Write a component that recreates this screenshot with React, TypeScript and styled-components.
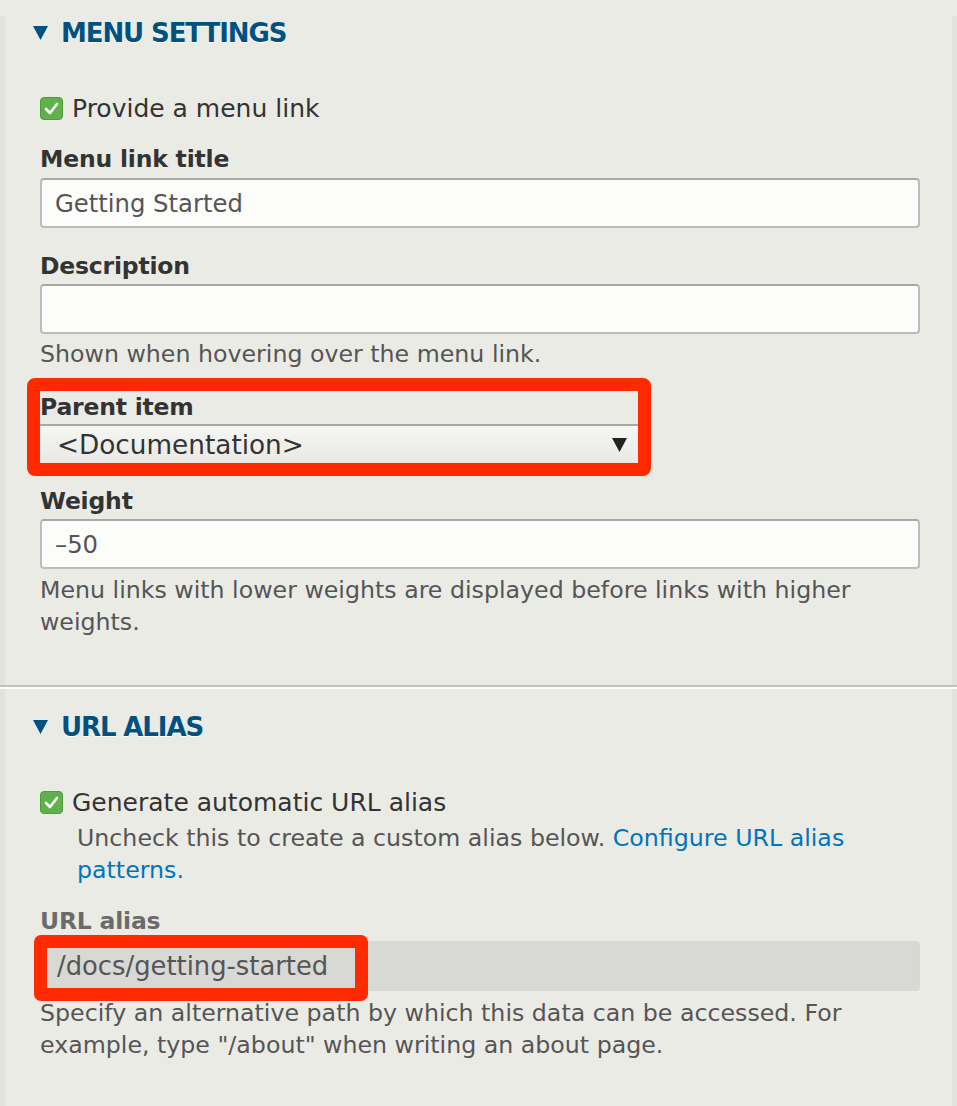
import React from 'react';
import styled, {createGlobalStyle} from 'styled-components';

const GlobalStyle = createGlobalStyle`
  body {
    margin: 0;
    background: #ebebe6;
    font-family: "DejaVu Sans", "Liberation Sans", sans-serif;
    color: #333;
  }
`

const Page = styled.div`
  width: 957px;
  min-height: 1106px;
  box-sizing: border-box;
  background: #ebebe6;
  border-left: 5px solid #e3e3de;
  border-right: 5px solid #e3e3de;
`

const Section = styled.section<{ $bottom: number }>`
  padding: 0 32px ${p => p.$bottom}px 35px;
`

const Divider = styled.div`
  height: 2px;
  background: #c2c2be;
  border-bottom: 2px solid #fbfbf9;
  margin: 0 -5px;
`

const Legend = styled.div<{ $top: number }>`
  display: flex;
  align-items: center;
  gap: 13px;
  height: 34px;
  margin-top: ${p => p.$top}px;
  margin-left: -7px;
  color: #00517f;
  font-weight: bold;
  font-size: 26px;
  letter-spacing: -1.1px;
  text-shadow: 0 1px 0 #fff;
`

const CheckRow = styled.label`
  display: flex;
  align-items: center;
  gap: 9px;
  height: 30px;
  margin-top: 43px;
  font-size: 25px;
  color: #333;
`

const Box = styled.span`
  width: 23px;
  height: 23px;
  border-radius: 4px;
  background: #5fb14b;
  border: 1px solid #4f9a3d;
  box-sizing: border-box;
  display: flex;
  align-items: center;
  justify-content: center;
`

const Label = styled.div<{ $top: number; $muted?: boolean }>`
  margin-top: ${p => p.$top}px;
  height: 30px;
  line-height: 30px;
  font-weight: bold;
  font-size: 23.5px;
  letter-spacing: -0.2px;
  color: ${p => p.$muted ? '#6b6b6b' : '#333'};
`

const Input = styled.div<{ $top: number; $disabled?: boolean }>`
  position: relative;
  margin-top: ${p => p.$top}px;
  height: 50px;
  box-sizing: border-box;
  border: ${p => p.$disabled ? '1px solid #d6d6d2' : '2px solid #bcbcbc'};
  border-top-color: ${p => p.$disabled ? '#d6d6d2' : '#a8a8a8'};
  border-radius: 4px;
  background: ${p => p.$disabled ? '#d8d8d4' : '#fcfcfa'};
  padding: 0 13px;
  display: flex;
  align-items: center;
  font-size: 24.3px;
  color: #555;
`

const Help = styled.div<{ $top: number; $indent?: number }>`
  margin-top: ${p => p.$top}px;
  padding-left: ${p => p.$indent || 0}px;
  font-size: 23.7px;
  line-height: 32px;
  color: #555;
`

const Link = styled.a`
  color: #0074bd;
  text-decoration: none;
`

const Frame = styled.div`
  position: relative;
  width: fit-content;
  margin-top: 8px;
  border: 13px solid #ff2a00;
  border-radius: 8px;
  margin-left: -13px;
`

const FrameLabel = styled.div`
  width: 598px;
  height: 33px;
  line-height: 33px;
  font-weight: bold;
  font-size: 23.5px;
  letter-spacing: -0.2px;
  background: #ebebe6;
  color: #333;
`

const Select = styled.div`
  width: 598px;
  height: 39px;
  box-sizing: border-box;
  border-top: 2px solid #a8a8a8;
  background: linear-gradient(#f6f6f3, #e8e8e4);
  display: flex;
  align-items: center;
  justify-content: space-between;
  padding: 0 11px 0 17px;
  font-size: 26.3px;
  color: #333;
`

const Mark = styled.div`
  position: absolute;
  left: -7px;
  top: -7px;
  width: 334px;
  height: 66px;
  box-sizing: border-box;
  border: 13px solid #ff2a00;
  border-radius: 7px;
  background: transparent;
`

const AliasText = styled.span`
  position: relative;
  z-index: 1;
  padding-left: 3px;
  font-size: 25.8px;
`

const Triangle = ({color}: { color: string }) => (
    <svg width="15" height="14" viewBox="0 0 15 14">
        <polygon points="0,0 15,0 7.5,14" fill={color}/>
    </svg>
)

const Check = () => (
    <svg width="15" height="13" viewBox="0 0 15 13">
        <polyline points="2,7 6,11 13,2" fill="none" stroke="#fff" strokeWidth="2.6"
                  strokeLinecap="round" strokeLinejoin="round"/>
    </svg>
)

function App() {
    return (
        <>
            <GlobalStyle/>
            <Page>
                <Section $bottom={47}>
                    <Legend $top={16}><Triangle color="#00517f"/>MENU SETTINGS</Legend>
                    <CheckRow><Box><Check/></Box>Provide a menu link</CheckRow>

                    <Label $top={21}>Menu link title</Label>
                    <Input $top={4}>Getting Started</Input>

                    <Label $top={23}>Description</Label>
                    <Input $top={3}/>
                    <Help $top={4}>Shown when hovering over the menu link.</Help>

                    <Frame>
                        <FrameLabel>Parent item</FrameLabel>
                        <Select>
                            &lt;Documentation&gt;
                            <Triangle color="#222"/>
                        </Select>
                    </Frame>

                    <Label $top={10}>Weight</Label>
                    <Input $top={3}>–50</Input>
                    <Help $top={5}>
                        Menu links with lower weights are displayed before links with higher weights.
                    </Help>
                </Section>

                <Divider/>

                <Section $bottom={40}>
                    <Legend $top={21}><Triangle color="#00517f"/>URL ALIAS</Legend>
                    <CheckRow><Box><Check/></Box>Generate automatic URL alias</CheckRow>
                    <Help $top={5} $indent={37}>
                        Uncheck this to create a custom alias below. <Link href="#">Configure URL alias</Link>
                        <br/><Link href="#">patterns.</Link>
                    </Help>

                    <Label $top={20} $muted>URL alias</Label>
                    <Input $top={5} $disabled>
                        <Mark/>
                        <AliasText>/docs/getting-started</AliasText>
                    </Input>
                    <Help $top={6}>
                        Specify an alternative path by which this data can be accessed. For example, type
                        "/about" when writing an about page.
                    </Help>
                </Section>
            </Page>
        </>
    );
}

export default App;
